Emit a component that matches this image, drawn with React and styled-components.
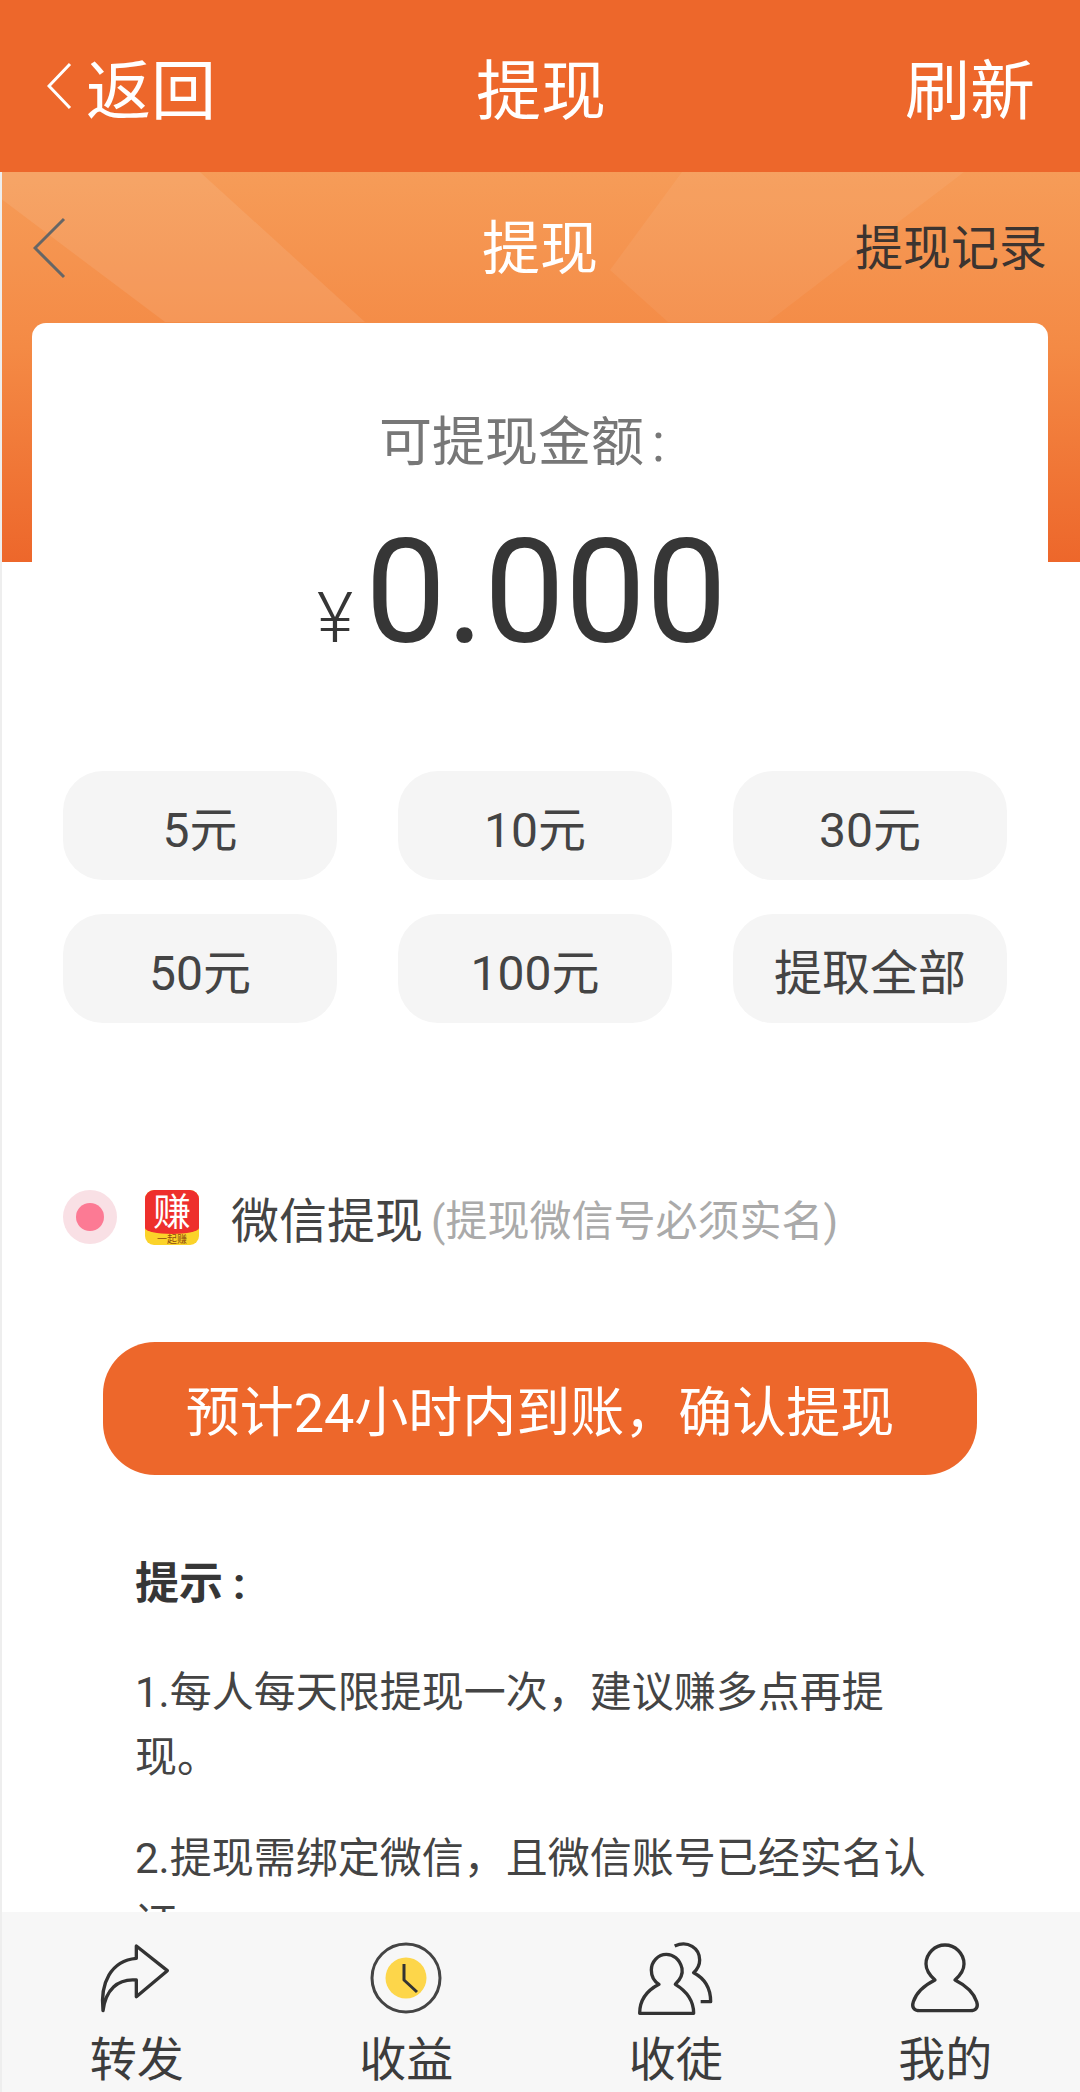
import React from 'react';
import styled, { createGlobalStyle } from 'styled-components';

const GlobalStyle = createGlobalStyle`
    html, body {
        margin: 0;
        padding: 0;
        background: #fff;
    }
    * {
        box-sizing: border-box;
    }
`;

const Page = styled.div`
    width: 1080px;
    height: 2092px;
    display: flex;
    flex-direction: column;
    overflow: hidden;
    background: #fff;
    color: #444;
    font-family: Roboto, "Noto Sans CJK SC", sans-serif;
`;

const TopBar = styled.div`
    flex: none;
    height: 172px;
    padding: 0 45px 0 47px;
    display: grid;
    grid-template-columns: 1fr auto 1fr;
    align-items: center;
    background: #ed672b;
    color: #fff;
    font-size: 65px;
`;

const BackLink = styled.div`
    display: flex;
    align-items: center;
    gap: 14px;
`;

const Refresh = styled.div`
    text-align: right;
`;

const Main = styled.div`
    flex: 1;
    min-height: 0;
    overflow: hidden;
    border-left: 2px solid #eee;
`;

const Banner = styled.div`
    position: relative;
    height: 390px;
    margin-left: -2px;
    background: linear-gradient(180deg, #f69c58 0%, #f48a45 45%, #ed672b 100%);
`;

const BannerArt = styled.svg`
    position: absolute;
    top: 0;
    left: 0;
`;

const BannerBar = styled.div`
    position: relative;
    height: 144px;
    padding: 0 33px 0 33px;
    display: grid;
    grid-template-columns: 1fr auto 1fr;
    align-items: center;
`;

const BannerBack = styled.div`
    display: flex;
    margin-top: 8px;
`;

const BannerTitle = styled.div`
    color: #fff;
    font-size: 58px;
`;

const Records = styled.div`
    text-align: right;
    color: #3c3430;
    font-size: 48px;
`;

const Card = styled.div`
    position: relative;
    width: 1016px;
    margin: -239px 0 0 30px;
    padding-top: 89px;
    background: #fff;
    border-radius: 14px 14px 0 0;
`;

const BalanceLabel = styled.div`
    padding-right: 36px;
    text-align: center;
    color: #777;
    font-size: 53px;
    line-height: 62px;
`;

const Colon = styled.span`
    margin-left: ${({ $gap }) => $gap}px;
`;

const BalanceRow = styled.div`
    margin-top: 39px;
    display: flex;
    justify-content: center;
    align-items: baseline;
    gap: 12px;
    padding-right: 36px;
    color: #363636;
`;

const Yen = styled.span`
    font-size: 70px;
    font-weight: 300;
`;

const Amount = styled.span`
    font-size: 144px;
    line-height: 160px;
`;

const AmountGrid = styled.div`
    margin: 98px 41px 0 31px;
    display: grid;
    grid-template-columns: repeat(3, 274px);
    justify-content: space-between;
    row-gap: 34px;
`;

const AmountButton = styled.div`
    height: 109px;
    display: flex;
    align-items: center;
    justify-content: center;
    background: #f5f5f5;
    border-radius: 40px;
    color: #444;
    font-size: 48px;
`;

const PayRow = styled.div`
    margin: 166px 0 0 31px;
    height: 56px;
    display: flex;
    align-items: center;
`;

const Radio = styled.div`
    width: 54px;
    height: 54px;
    display: flex;
    align-items: center;
    justify-content: center;
    border-radius: 50%;
    background: #f9e0e5;

    &::before {
        content: "";
        width: 28px;
        height: 28px;
        border-radius: 50%;
        background: #fc7a94;
    }
`;

const AppLogo = styled.div`
    width: 54px;
    height: 55px;
    margin-left: 28px;
    display: flex;
    flex-direction: column;
    align-items: center;
    border-radius: 9px;
    background: #fbd32a;
`;

const LogoChar = styled.div`
    width: 100%;
    height: 44px;
    flex: none;
    text-align: center;
    background: #ee2f2c;
    border-radius: 9px 9px 50% 50% / 9px 9px 6px 6px;
    color: #fff;
    font-size: 38px;
    line-height: 44px;
`;

const LogoStrip = styled.div`
    color: #8d4a10;
    font-size: 10px;
    line-height: 11px;
`;

const PayName = styled.div`
    margin-left: 32px;
    color: #444;
    font-size: 48px;
`;

const PayNote = styled.div`
    margin-left: 8px;
    color: #aaa;
    font-size: 42px;
`;

const ConfirmButton = styled.div`
    width: 874px;
    height: 133px;
    margin: 97px 0 0 71px;
    display: flex;
    align-items: center;
    justify-content: center;
    background: #ed672b;
    border-radius: 52px;
    color: #fff;
    font-size: 54px;
`;

const Tips = styled.div`
    width: 805px;
    margin: 77px 0 0 103px;
    color: #444;
    font-size: 42px;
    line-height: 65px;
`;

const TipsTitle = styled.div`
    margin-bottom: 43px;
    color: #363636;
    font-size: 44px;
    font-weight: 700;
`;

const TipItem = styled.div`
    margin-bottom: 36px;
`;

const BottomNav = styled.div`
    flex: none;
    height: 180px;
    display: grid;
    grid-template-columns: repeat(4, 1fr);
    background: #f7f7f7;
    border-left: 2px solid #eee;
`;

const NavItem = styled.div`
    display: flex;
    flex-direction: column;
    align-items: center;
    padding-top: 28px;
`;

const NavIcon = styled.svg`
    display: block;
    width: 80px;
    height: 78px;
    fill: none;
    stroke: #333;
    stroke-linejoin: round;
`;

const NavLabel = styled.div`
    margin-top: 12px;
    color: #3c3c3c;
    font-size: 47px;
    line-height: 60px;
`;

const Chevron = ({ width, height, color }) => (
    <svg width={width + 4} height={height + 4} viewBox={`-2 -2 ${width + 4} ${height + 4}`} fill="none" stroke={color} strokeWidth="3">
        <path d={`M${width} 0L0 ${height / 2}L${width} ${height}`} />
    </svg>
);

const ForwardIcon = () => (
    <NavIcon viewBox="279 150 240 234" strokeWidth="10">
        <path d="M297 362C288 280 320 212 397 205L397 168L490 242L397 320L397 270C340 265 305 300 297 362Z" />
    </NavIcon>
);

const ClockIcon = () => (
    <NavIcon viewBox="0 0 80 78">
        <circle cx="40" cy="38" r="20.5" fill="#fdd64a" stroke="none" />
        <circle cx="40" cy="38" r="34" strokeWidth="3" stroke="#444" />
        <path d="M38 24V40L51 52" strokeWidth="3" />
    </NavIcon>
);

const FollowersIcon = () => (
    <NavIcon viewBox="274 150 240 234" strokeWidth="10">
        <path d="M285 370H447C447 325 420 300 392 283C408 268 415 252 412 235C405 207 385 193 365 193C340 193 320 215 320 240C320 260 330 275 343 283C310 300 285 325 285 370Z" />
        <path d="M390 168C430 150 465 175 465 210C465 225 458 238 447 248C480 265 498 295 498 335H468" />
    </NavIcon>
);

const MeIcon = () => (
    <NavIcon viewBox="1055 150 240 234" strokeWidth="10">
        <path d="M1100 362H1250C1270 362 1275 350 1270 335C1260 305 1235 285 1205 270C1222 255 1232 240 1232 222C1232 190 1205 165 1175 165C1145 165 1118 190 1118 222C1118 240 1128 255 1145 270C1115 285 1090 305 1080 335C1075 350 1080 362 1100 362Z" />
    </NavIcon>
);

const amounts = ['5元', '10元', '30元', '50元', '100元', '提取全部'];

const navItems = [
    { label: '转发', Icon: ForwardIcon },
    { label: '收益', Icon: ClockIcon },
    { label: '收徒', Icon: FollowersIcon },
    { label: '我的', Icon: MeIcon },
];

const App = () => {
    return (
        <Page>
            <GlobalStyle />
            <TopBar>
                <BackLink>
                    <Chevron width={21} height={44} color="#fff" />
                    <span>返回</span>
                </BackLink>
                <div>提现</div>
                <Refresh>刷新</Refresh>
            </TopBar>
            <Main>
                <Banner>
                    <BannerArt width="1080" height="390" viewBox="0 0 1080 390">
                        <polygon points="0,0 200,0 365,150 165,150 0,26" fill="#fff" opacity="0.09" />
                        <polygon points="682,0 964,0 768,150 668,150 610,98" fill="#fff" opacity="0.06" />
                    </BannerArt>
                    <BannerBar>
                        <BannerBack>
                            <Chevron width={29} height={58} color="#666" />
                        </BannerBack>
                        <BannerTitle>提现</BannerTitle>
                        <Records>提现记录</Records>
                    </BannerBar>
                </Banner>
                <Card>
                    <BalanceLabel>可提现金额<Colon $gap={8}>:</Colon></BalanceLabel>
                    <BalanceRow>
                        <Yen>¥</Yen>
                        <Amount>0.000</Amount>
                    </BalanceRow>
                    <AmountGrid>
                        {amounts.map((item) => (
                            <AmountButton key={item}>{item}</AmountButton>
                        ))}
                    </AmountGrid>
                    <PayRow>
                        <Radio />
                        <AppLogo>
                            <LogoChar>赚</LogoChar>
                            <LogoStrip>一起赚</LogoStrip>
                        </AppLogo>
                        <PayName>微信提现</PayName>
                        <PayNote>(提现微信号必须实名)</PayNote>
                    </PayRow>
                    <ConfirmButton>预计24小时内到账，确认提现</ConfirmButton>
                    <Tips>
                        <TipsTitle>提示<Colon $gap={10}>:</Colon></TipsTitle>
                        <TipItem>1.每人每天限提现一次，建议赚多点再提现。</TipItem>
                        <TipItem>2.提现需绑定微信，且微信账号已经实名认证。</TipItem>
                    </Tips>
                </Card>
            </Main>
            <BottomNav>
                {navItems.map(({ label, Icon }) => (
                    <NavItem key={label}>
                        <Icon />
                        <NavLabel>{label}</NavLabel>
                    </NavItem>
                ))}
            </BottomNav>
        </Page>
    );
};

export default App;
